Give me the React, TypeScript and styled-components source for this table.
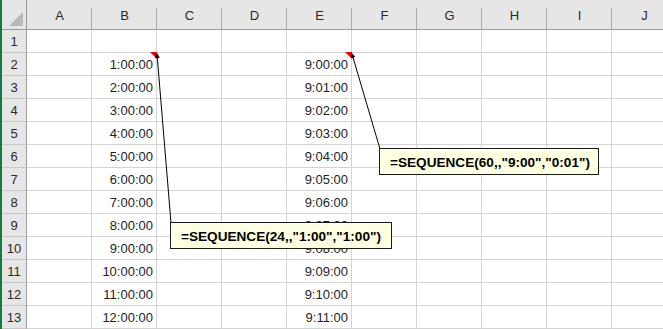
import React from "react";
import styled, { createGlobalStyle } from "styled-components";

const Global = createGlobalStyle`
  html, body { margin: 0; padding: 0; background: #fff; }
  body { width: 663px; height: 329px; overflow: hidden; }
`;

const Sheet = styled.div`
  position: relative;
  width: 663px;
  height: 329px;
  overflow: hidden;
  border-left: 2px solid #217346;
  box-sizing: border-box;
  font-family: "Liberation Sans", Arial, sans-serif;
`;

const Grid = styled.div`
  display: grid;
  grid-template-columns: 25px repeat(10, 65px);
  grid-template-rows: 30px repeat(13, 23px);
`;

const Corner = styled.div`
  position: relative;
  background: #e6e6e6;
  border-right: 1px solid #9c9c9c;
  border-bottom: 1px solid #9c9c9c;
  box-sizing: border-box;
  &::after {
    content: "";
    position: absolute;
    right: 3px;
    bottom: 3px;
    width: 0;
    height: 0;
    border-left: 14px solid transparent;
    border-bottom: 14px solid #b9b9b9;
  }
`;

const ColHead = styled.div`
  position: relative;
  background: #e6e6e6;
  border-bottom: 1px solid #9c9c9c;
  box-sizing: border-box;
  display: flex;
  align-items: center;
  justify-content: center;
  padding-top: 2px;
  font-size: 13px;
  color: #2a2a2a;
  &::after {
    content: "";
    position: absolute;
    right: 0;
    top: 8px;
    bottom: 0;
    width: 1px;
    background: #ababab;
  }
`;

const RowHead = styled.div`
  background: #e6e6e6;
  border-right: 1px solid #9c9c9c;
  border-bottom: 1px solid #c8c8c8;
  box-sizing: border-box;
  display: flex;
  align-items: center;
  justify-content: center;
  font-size: 13px;
  color: #2a2a2a;
`;

const Cell = styled.div<{ $align?: string }>`
  border-right: 1px solid #d4d4d4;
  border-bottom: 1px solid #d4d4d4;
  box-sizing: border-box;
  display: flex;
  align-items: center;
  justify-content: ${(p) => p.$align || "flex-start"};
  padding: 1px 3px 0 3px;
  font-size: 13px;
  color: #1e1e1e;
  white-space: nowrap;
  position: relative;
`;

const Flag = styled.span`
  position: absolute;
  right: -1px;
  top: -1px;
  width: 0;
  height: 0;
  border-left: 7px solid transparent;
  border-top: 7px solid #f00000;
  z-index: 2;
`;

const Overlay = styled.svg`
  position: absolute;
  left: -2px;
  top: 0;
  pointer-events: none;
  z-index: 3;
`;

const Note = styled.div<{ $x: number; $y: number; $w: number }>`
  position: absolute;
  left: ${(p) => p.$x}px;
  top: ${(p) => p.$y}px;
  width: ${(p) => p.$w}px;
  height: 27px;
  box-sizing: border-box;
  background: #ffffe1;
  border: 1px solid #1a1a1a;
  display: flex;
  align-items: center;
  padding: 1px 0 0 10px;
  font-weight: bold;
  font-size: 13.6px;
  color: #000;
  white-space: nowrap;
  z-index: 4;
`;

const cols = ["A", "B", "C", "D", "E", "F", "G", "H", "I", "J"];

const pad = (n: number) => String(n).padStart(2, "0");

export default function App() {
  const rows = Array.from({ length: 13 }, (_, i) => i + 1);
  return (
    <>
      <Global />
      <Sheet>
        <Grid>
          <Corner />
          {cols.map((c) => (
            <ColHead key={c}>{c}</ColHead>
          ))}
          {rows.map((r) => (
            <React.Fragment key={r}>
              <RowHead>{r}</RowHead>
              {cols.map((c) => {
                let text = "";
                if (c === "B" && r >= 2) text = `${r - 1}:00:00`;
                if (c === "E" && r >= 2) text = `9:${pad(r - 2)}:00`;
                return (
                  <Cell key={c} $align={text ? "flex-end" : "flex-start"}>
                    {text}
                    {r === 2 && (c === "B" || c === "E") && <Flag />}
                  </Cell>
                );
              })}
            </React.Fragment>
          ))}
        </Grid>
        <Overlay width="663" height="329" viewBox="0 0 663 329">
          <defs>
            <marker id="ah" markerWidth="5" markerHeight="5" refX="4" refY="2.5" orient="auto" markerUnits="userSpaceOnUse">
              <path d="M0,0 L5,2.5 L0,5 Z" fill="#000" />
            </marker>
          </defs>
          <line x1="171" y1="223" x2="157" y2="54" stroke="#000" strokeWidth="1" markerEnd="url(#ah)" />
          <line x1="380" y1="149" x2="352" y2="54" stroke="#000" strokeWidth="1" markerEnd="url(#ah)" />
        </Overlay>
        <Note $x={168} $y={222} $w={222}>=SEQUENCE(24,,"1:00","1:00")</Note>
        <Note $x={377} $y={148} $w={220}>=SEQUENCE(60,,"9:00","0:01")</Note>
      </Sheet>
    </>
  );
}
